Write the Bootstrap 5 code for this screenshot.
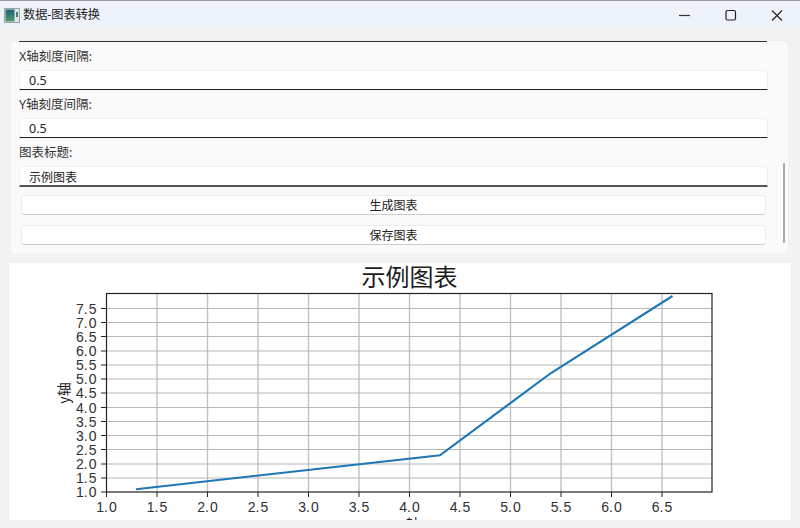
<!DOCTYPE html>
<html lang="zh">
<head>
<meta charset="utf-8">
<title>数据-图表转换</title>
<link href="https://cdn.jsdelivr.net/npm/bootstrap@5.3.0/dist/css/bootstrap.min.css" rel="stylesheet">
<style>
html,body{height:528px;overflow:hidden;}
body{background:#f3f3f3;color:#2b2b2b;font-family:"Noto Sans","Noto Sans CJK SC",sans-serif;font-size:12px;line-height:1.2;}
.win-bar{height:29px;background:linear-gradient(#eef3fb 0,#eef3fb 26px,#f3f3f3 29px);border-top:1px solid #9c9c9c;padding-left:4px;}
.win-title{font-size:12.2px;margin-left:3px;color:#222;}
.win-ctl{width:46px;margin-right:0;}
.form-panel{margin:11px 0 0 10px;width:779px;height:215px;background:#fafafa;border:1px solid #f0f0f0;border-radius:5px;padding:0 20px 0 8px;}
.cut-line{height:1px;background:#333;margin-right:1px;}
.field-label{display:block;height:28px;margin:0;padding-top:7px;font-size:12.5px;line-height:15px;color:#333;}
.field-input.form-control{height:20px;padding:1px 9px 0;font-size:12.5px;line-height:16px;color:#222;background:#fff;border:1px solid #f1f1f1;border-bottom:1.5px solid #222;border-radius:4px 4px 0 0;box-shadow:none;}
.field-input.tall{height:21px;font-size:12px;border-bottom:2px solid #555;}
.act-btn.btn{display:block;width:745px;height:20px;margin:0 0 0 2px;padding:1px 0 0;font-size:12px;line-height:18px;color:#222;background:#fff;border:1px solid #ececec;border-bottom-color:#cbcbcb;border-radius:4px;}
.act-btn.first{margin-top:8px;}
.act-btn.second{margin-top:10px;}
.fake-scroll{position:absolute;left:772px;top:122px;width:1.5px;height:80px;background:#a8a8a8;border-radius:1px;}
.chart-panel{margin:8px 0 0 9px;width:782px;height:257px;background:#fff;overflow:hidden;}
.chart-panel svg{display:block;}
.tk{font-family:"Liberation Sans",sans-serif;font-size:14px;fill:#303030;}
.cjk{font-family:"Noto Sans CJK SC",sans-serif;fill:#1c1c1c;}
</style>
</head>
<body>
<div class="win-bar d-flex align-items-center">
  <svg width="16" height="15" viewBox="0 0 16 15">
    <defs><linearGradient id="ig" x1="0" y1="0" x2="0" y2="1"><stop offset="0" stop-color="#1f5f7a"/><stop offset="1" stop-color="#4f9d6d"/></linearGradient></defs>
    <rect x=".5" y=".5" width="15" height="14" fill="#dfe6e6" stroke="#9aa4a6"/>
    <rect x="1.5" y="1.5" width="9" height="12" fill="url(#ig)"/>
    <rect x="12" y="4" width="2" height="5" fill="#4a7a80"/>
  </svg>
  <span class="win-title">数据-图表转换</span>
  <div class="ms-auto d-flex">
    <svg class="win-ctl" width="46" height="14" viewBox="0 0 46 14"><path d="M17 7.5H28" stroke="#333" stroke-width="1.2"/></svg>
    <svg class="win-ctl" width="46" height="14" viewBox="0 0 46 14"><rect x="18" y="2.5" width="9.5" height="9.5" rx="1.5" fill="none" stroke="#222" stroke-width="1.2"/></svg>
    <svg class="win-ctl" width="46" height="14" viewBox="0 0 46 14"><path d="M18 2.5L28 12.5M28 2.5L18 12.5" stroke="#222" stroke-width="1.1"/></svg>
  </div>
</div>

<div class="form-panel position-relative">
  <div class="cut-line"></div>
  <label class="field-label">X轴刻度间隔:</label>
  <input class="form-control field-input" value="0.5">
  <label class="field-label">Y轴刻度间隔:</label>
  <input class="form-control field-input" value="0.5">
  <label class="field-label">图表标题:</label>
  <input class="form-control field-input tall" value="示例图表">
  <button class="btn act-btn first" type="button">生成图表</button>
  <button class="btn act-btn second" type="button">保存图表</button>
  <div class="fake-scroll"></div>
</div>

<div class="chart-panel">
  <svg width="782" height="257" viewBox="9 263 782 257">
    <path fill="none" stroke="#c2c2c2" stroke-width="1.4" d="M157 293V492M207.5 293V492M258 293V492M308.5 293V492M359 293V492M409.5 293V492M460 293V492M510.5 293V492M561 293V492M611.5 293V492M662 293V492"/>
    <path fill="none" stroke="#b8b8b8" stroke-width="1.2" d="M106 478H712M106 464H712M106 449.5H712M106 435.5H712M106 421.5H712M106 407.5H712M106 393H712M106 379H712M106 365H712M106 351H712M106 336.5H712M106 322.5H712M106 308.5H712"/>
    <polyline fill="none" stroke="#1f77b4" stroke-width="2.1" points="136,489.2 440,455.3 551,373 672.5,296"/>
    <rect x="106.5" y="293.5" width="605.5" height="198.5" fill="none" stroke="#222" stroke-width="1.2"/>
    <path fill="none" stroke="#222" d="M106.5 492V497M157 492V497M207.5 492V497M258 492V497M308.5 492V497M359 492V497M409.5 492V497M460 492V497M510.5 492V497M561 492V497M611.5 492V497M662 492V497M101 492H106M101 478H106M101 464H106M101 449.5H106M101 435.5H106M101 421.5H106M101 407.5H106M101 393H106M101 379H106M101 365H106M101 351H106M101 336.5H106M101 322.5H106M101 308.5H106"/>
    <text class="cjk" x="409.5" y="286" text-anchor="middle" font-size="24">示例图表</text>
    <g class="tk" text-anchor="middle">
      <text x="106.5" y="512">1.<tspan dx="1">0</tspan></text>
      <text x="157" y="512">1.<tspan dx="1">5</tspan></text>
      <text x="207.5" y="512">2.<tspan dx="1">0</tspan></text>
      <text x="258" y="512">2.<tspan dx="1">5</tspan></text>
      <text x="308.5" y="512">3.<tspan dx="1">0</tspan></text>
      <text x="359" y="512">3.<tspan dx="1">5</tspan></text>
      <text x="409.5" y="512">4.<tspan dx="1">0</tspan></text>
      <text x="460" y="512">4.<tspan dx="1">5</tspan></text>
      <text x="510.5" y="512">5.<tspan dx="1">0</tspan></text>
      <text x="561" y="512">5.<tspan dx="1">5</tspan></text>
      <text x="611.5" y="512">6.<tspan dx="1">0</tspan></text>
      <text x="662" y="512">6.<tspan dx="1">5</tspan></text>
    </g>
    <g class="tk" text-anchor="end">
      <text x="96.5" y="497">1.<tspan dx="1">0</tspan></text>
      <text x="96.5" y="483">1.<tspan dx="1">5</tspan></text>
      <text x="96.5" y="469">2.<tspan dx="1">0</tspan></text>
      <text x="96.5" y="454.5">2.<tspan dx="1">5</tspan></text>
      <text x="96.5" y="440.5">3.<tspan dx="1">0</tspan></text>
      <text x="96.5" y="426.5">3.<tspan dx="1">5</tspan></text>
      <text x="96.5" y="412.5">4.<tspan dx="1">0</tspan></text>
      <text x="96.5" y="398">4.<tspan dx="1">5</tspan></text>
      <text x="96.5" y="384">5.<tspan dx="1">0</tspan></text>
      <text x="96.5" y="370">5.<tspan dx="1">5</tspan></text>
      <text x="96.5" y="356">6.<tspan dx="1">0</tspan></text>
      <text x="96.5" y="341.5">6.<tspan dx="1">5</tspan></text>
      <text x="96.5" y="327.5">7.<tspan dx="1">0</tspan></text>
      <text x="96.5" y="313.5">7.<tspan dx="1">5</tspan></text>
    </g>
    <text class="cjk" font-size="14" text-anchor="middle" transform="translate(69 393) rotate(-90)">y轴</text>
    <text class="cjk" font-size="14" text-anchor="middle" x="409.5" y="529">x轴</text>
  </svg>
</div>
<script src="https://cdn.jsdelivr.net/npm/bootstrap@5.3.0/dist/js/bootstrap.bundle.min.js"></script>
</body>
</html>
